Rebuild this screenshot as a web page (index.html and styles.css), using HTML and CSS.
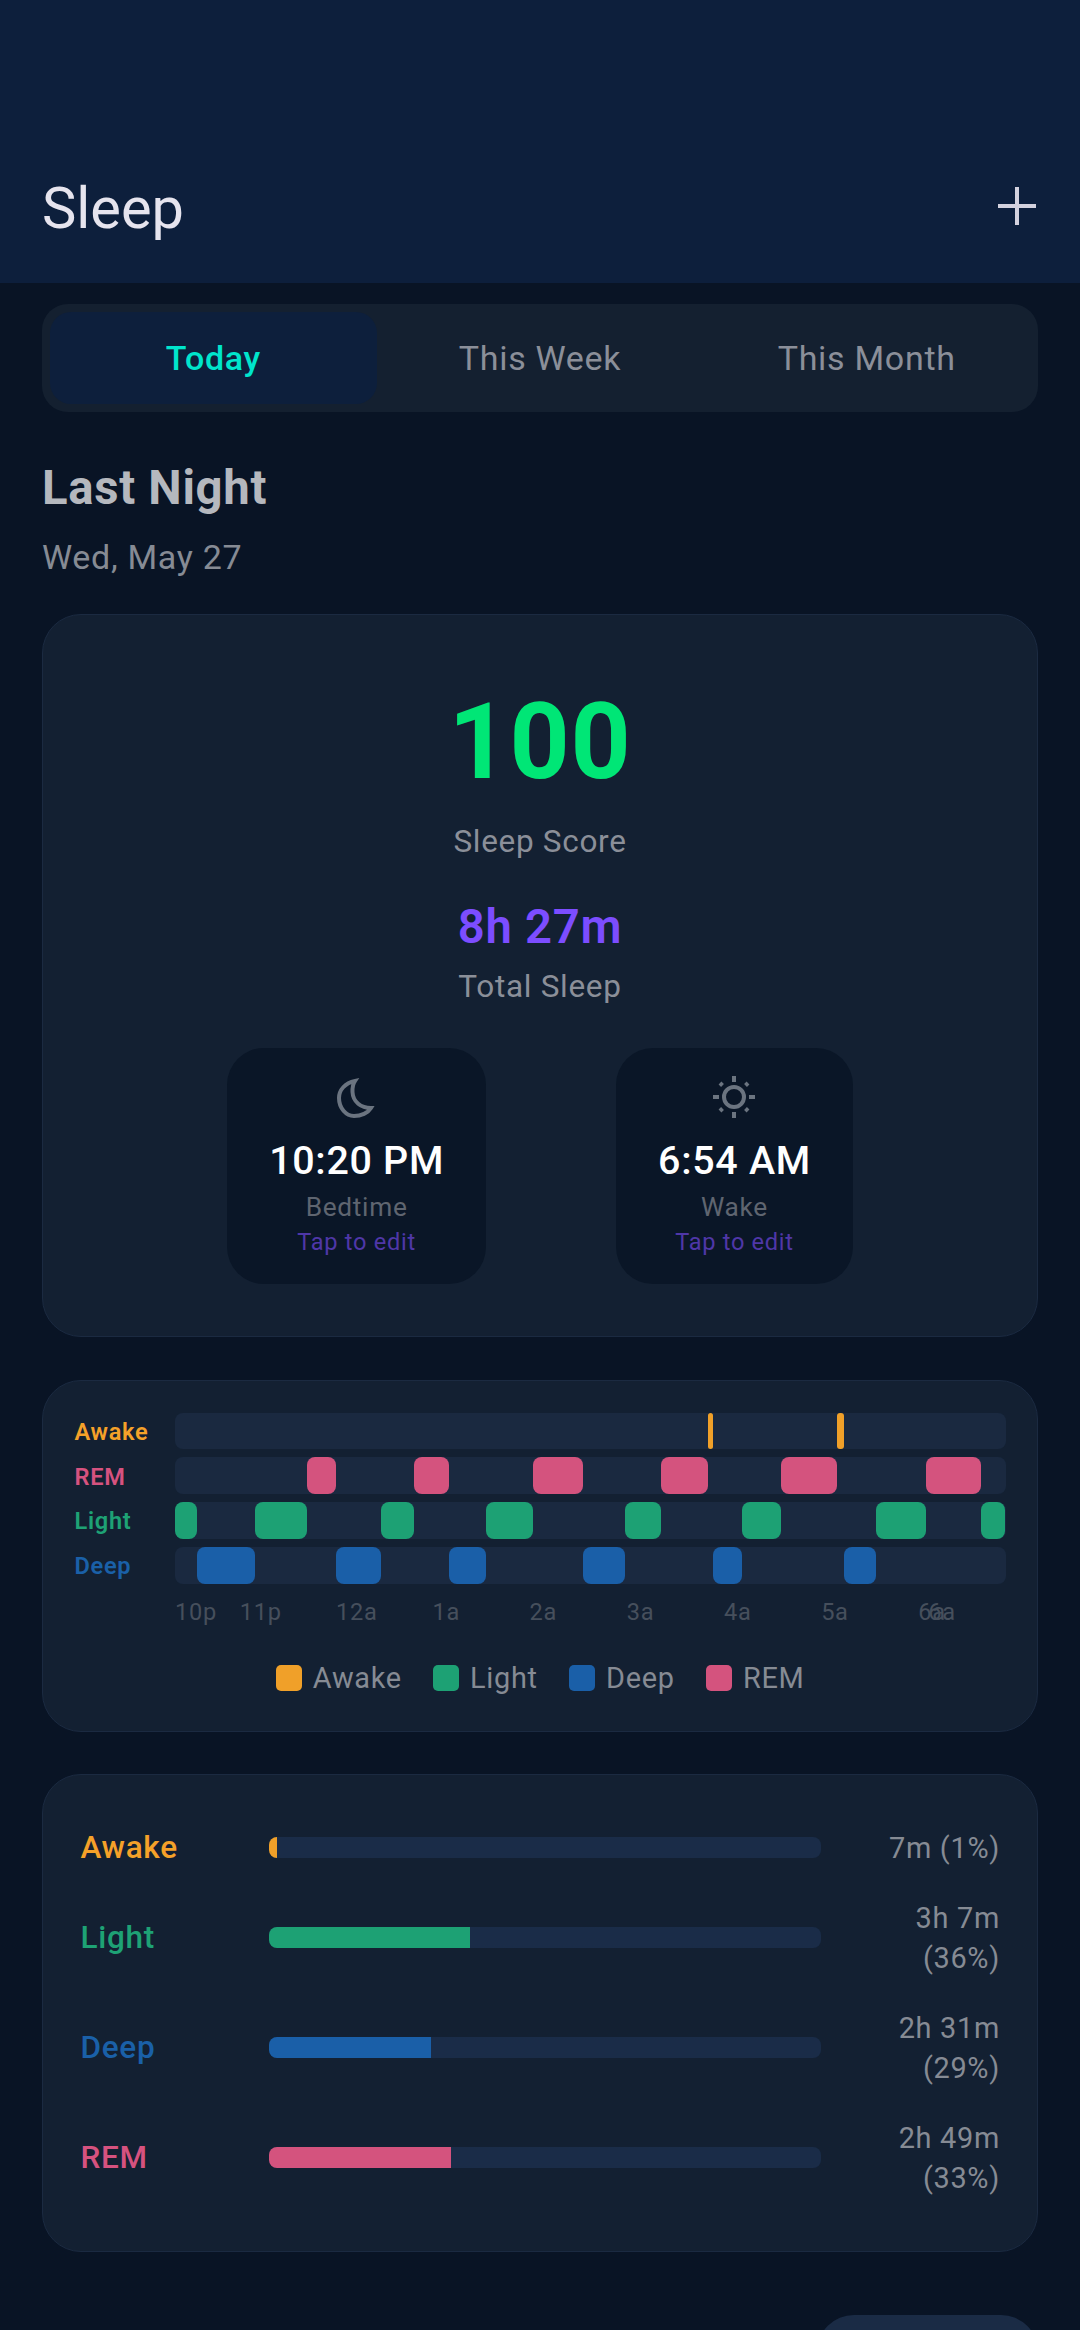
FILE: index.html
```html
<!DOCTYPE html>
<html lang="en">
<head>
<meta charset="utf-8">
<title>Sleep</title>
<link rel="stylesheet" href="styles.css">
</head>
<body>
<div class="page">
  <header class="header">
    <h1 class="title">Sleep</h1>
    <svg class="add" viewBox="0 0 38 38" aria-hidden="true"><path d="M19 0V38M0 19H38"/></svg>
  </header>
  <main class="content">
    <nav class="tabs">
      <div class="tab active">Today</div>
      <div class="tab">This Week</div>
      <div class="tab">This Month</div>
    </nav>
    <h2 class="section-title">Last Night</h2>
    <div class="section-date">Wed, May 27</div>

    <section class="card score-card">
      <div class="score">100</div>
      <div class="stat-label">Sleep Score</div>
      <div class="total">8h 27m</div>
      <div class="stat-label total-label">Total Sleep</div>
      <div class="times">
        <div class="time-card">
          <svg class="time-icon" viewBox="0 0 48 48" aria-hidden="true"><path d="M22 8C12 10 6 17 6 25C6 35 13 43 21 43C28 43 35 40 38 35C28 35 20 29 19.5 19C19.3 15 20 11 22 8Z"/></svg>
          <div class="time-value">10:20 PM</div>
          <div class="time-label">Bedtime</div>
          <div class="time-edit">Tap to edit</div>
        </div>
        <div class="time-card">
          <svg class="time-icon" viewBox="0 0 48 48" aria-hidden="true"><circle cx="24" cy="24" r="10"/><path d="M24 3V9M24 39V45M3 24H9M39 24H45M10 10L12.5 12.5M38 10L35.500 12.500M10 38L12.500 35.500M38 38L35.500 35.500"/></svg>
          <div class="time-value">6:54 AM</div>
          <div class="time-label">Wake</div>
          <div class="time-edit">Tap to edit</div>
        </div>
      </div>
    </section>

    <section class="card timeline-card">
      <div class="tl-row">
        <div class="tl-label awake">Awake</div>
        <div class="tl-track">
          <i class="seg bg-awake thin" style="left:64.22%;width:.6%"></i>
          <i class="seg bg-awake thin" style="left:79.76%;width:.84%"></i>
        </div>
      </div>
      <div class="tl-row">
        <div class="tl-label rem">REM</div>
        <div class="tl-track">
          <i class="seg bg-rem" style="left:15.9%;width:3.49%"></i>
          <i class="seg bg-rem" style="left:28.8%;width:4.22%"></i>
          <i class="seg bg-rem" style="left:43.13%;width:6.02%"></i>
          <i class="seg bg-rem" style="left:58.55%;width:5.66%"></i>
          <i class="seg bg-rem" style="left:73.01%;width:6.75%"></i>
          <i class="seg bg-rem" style="left:90.48%;width:6.63%"></i>
        </div>
      </div>
      <div class="tl-row">
        <div class="tl-label light">Light</div>
        <div class="tl-track">
          <i class="seg bg-light" style="left:0;width:2.65%"></i>
          <i class="seg bg-light" style="left:9.64%;width:6.27%"></i>
          <i class="seg bg-light" style="left:24.82%;width:3.98%"></i>
          <i class="seg bg-light" style="left:37.47%;width:5.66%"></i>
          <i class="seg bg-light" style="left:54.22%;width:4.34%"></i>
          <i class="seg bg-light" style="left:68.31%;width:4.7%"></i>
          <i class="seg bg-light" style="left:84.46%;width:6.02%"></i>
          <i class="seg bg-light" style="left:97.11%;width:2.89%"></i>
        </div>
      </div>
      <div class="tl-row">
        <div class="tl-label deep">Deep</div>
        <div class="tl-track">
          <i class="seg bg-deep" style="left:2.65%;width:6.99%"></i>
          <i class="seg bg-deep" style="left:19.4%;width:5.42%"></i>
          <i class="seg bg-deep" style="left:33.01%;width:4.46%"></i>
          <i class="seg bg-deep" style="left:49.16%;width:5.06%"></i>
          <i class="seg bg-deep" style="left:64.82%;width:3.49%"></i>
          <i class="seg bg-deep" style="left:80.6%;width:3.86%"></i>
        </div>
      </div>
      <div class="axis">
        <span style="left:0">10p</span>
        <span style="left:7.8%">11p</span>
        <span style="left:19.4%">12a</span>
        <span style="left:31%">1a</span>
        <span style="left:42.7%">2a</span>
        <span style="left:54.4%">3a</span>
        <span style="left:66.1%">4a</span>
        <span style="left:77.8%">5a</span>
        <span style="left:89.5%">6a</span>
        <span style="left:90.7%">6a</span>
      </div>
      <div class="legend">
        <div class="legend-item"><i class="swatch bg-awake"></i>Awake</div>
        <div class="legend-item"><i class="swatch bg-light"></i>Light</div>
        <div class="legend-item"><i class="swatch bg-deep"></i>Deep</div>
        <div class="legend-item"><i class="swatch bg-rem"></i>REM</div>
      </div>
    </section>

    <section class="card breakdown-card">
      <div class="bd-row">
        <div class="bd-label awake">Awake</div>
        <div class="bd-track"><i class="bd-fill bg-awake" style="width:1.4%"></i></div>
        <div class="bd-value">7m (1%)</div>
      </div>
      <div class="bd-row">
        <div class="bd-label light">Light</div>
        <div class="bd-track"><i class="bd-fill bg-light" style="width:36.4%"></i></div>
        <div class="bd-value">3h 7m (36%)</div>
      </div>
      <div class="bd-row">
        <div class="bd-label deep">Deep</div>
        <div class="bd-track"><i class="bd-fill bg-deep" style="width:29.3%"></i></div>
        <div class="bd-value">2h 31m (29%)</div>
      </div>
      <div class="bd-row">
        <div class="bd-label rem">REM</div>
        <div class="bd-track"><i class="bd-fill bg-rem" style="width:33%"></i></div>
        <div class="bd-value">2h 49m (33%)</div>
      </div>
    </section>

    <div class="footer-row"><div class="footer-btn"></div></div>
  </main>
</div>
</body>
</html>
```

FILE: styles.css
```css
* { box-sizing: border-box; }
html, body { margin: 0; padding: 0; }
body {
  width: 1080px;
  height: 2330px;
  overflow: hidden;
  background: #091425;
  font-family: Roboto, "Noto Sans", sans-serif;
  letter-spacing: .7px;
}
.page { display: flex; flex-direction: column; height: 2330px; overflow: hidden; }

.header {
  height: 283px;
  flex: none;
  background: #0d1f3c;
  display: flex;
  align-items: flex-end;
  justify-content: space-between;
  padding: 0 44px 41px 42px;
}
.title { margin: 0; font-size: 57.75px; line-height: 68px; font-weight: 400; letter-spacing: 0; color: #e6e4ee; }
.add { width: 38px; height: 38px; margin-bottom: 17px; flex: none; }
.add path { fill: none; stroke: #d3d1de; stroke-width: 4; }

.content { padding: 21px 42px 0; display: flex; flex-direction: column; }

.tabs {
  height: 108px;
  display: flex;
  padding: 8px;
  background: #142030;
  border-radius: 26px;
  flex: none;
}
.tab {
  flex: 1;
  display: flex;
  align-items: center;
  justify-content: center;
  font-size: 34px;
  color: #8b8f99;
  border-radius: 21px;
}
.tab.active { background: #0d1f3c; color: #00e5cc; font-weight: 500; }

.section-title {
  margin: 48px 0 0;
  font-size: 47.25px;
  line-height: 56px;
  font-weight: 700;
  color: #b5b8be;
}
.section-date { margin-top: 21px; font-size: 34px; line-height: 40px; color: #868b94; }

.card {
  background: #132032;
  border: 1.5px solid #1b2a41;
  border-radius: 39px;
  flex: none;
}
.score-card {
  margin-top: 37px;
  height: 723px;
  padding-top: 68px;
  display: flex;
  flex-direction: column;
  align-items: center;
}
.score { font-size: 105px; line-height: 120px; font-weight: 700; color: #00e676; }
.stat-label { margin-top: 18.5px; font-size: 31.5px; line-height: 40px; color: #8b8f99; }
.total { margin-top: 37.5px; font-size: 47.25px; line-height: 56px; font-weight: 600; color: #7c4dff; }
.stat-label.total-label { margin-top: 11.5px; }

.times { display: flex; justify-content: center; gap: 130px; margin-top: 41.5px; }
.time-card {
  background: #0a1627;
  border-radius: 37px;
  height: 236px;
  padding: 25px 42px 0;
  display: flex;
  flex-direction: column;
  align-items: center;
}
.time-icon { width: 48px; height: 48px; flex: none; }
.time-icon * { fill: none; stroke: #6b7480; stroke-width: 4; }
.time-value { margin-top: 16.5px; font-size: 39.4px; line-height: 46px; font-weight: 500; color: #fff; }
.time-label { margin-top: 6.5px; font-size: 26.25px; line-height: 34px; color: #5f6570; }
.time-edit { margin-top: 3px; font-size: 23.6px; line-height: 30px; color: #4f37a8; }

.timeline-card { margin-top: 43px; height: 352px; padding: 31.5px 31.500px 0; }
.tl-row { display: flex; align-items: center; height: 36.75px; margin-bottom: 8px; }
.tl-label { width: 100.500px; flex: none; font-size: 23.6px; line-height: 30px; padding-top: 2px; font-weight: 600; }
.tl-track { position: relative; flex: 1; height: 100%; background: #1a2940; border-radius: 8px; }
.seg { position: absolute; top: 0; bottom: 0; border-radius: 8px; }
.seg.thin { border-radius: 3px; }

.awake { color: #f5a129; }
.rem { color: #d6527f; }
.light { color: #1ea275; }
.deep { color: #1a60a8; }
.bg-awake { background: #f0a029; }
.bg-rem { background: #d4537e; }
.bg-light { background: #1da174; }
.bg-deep { background: #1a5fa8; }

.axis { position: relative; margin-left: 100.500px; height: 32px; margin-top: 12.5px; }
.axis span { position: absolute; top: 0; font-size: 23.6px; line-height: 32px; color: #464f5c; }

.legend { display: flex; justify-content: center; gap: 31px; margin-top: 33px; }
.legend-item { display: flex; align-items: center; gap: 11px; font-size: 28.9px; line-height: 34px; color: #868b94; }
.swatch { width: 26.25px; height: 26.25px; border-radius: 5px; flex: none; }

.breakdown-card {
  margin-top: 42px;
  height: 478px;
  padding: 52.5px 37px 0 37.500px;
  display: flex;
  flex-direction: column;
  gap: 30px;
}
.bd-row { display: flex; align-items: center; }
.bd-label { width: 188.500px; flex: none; font-size: 31.5px; font-weight: 500; }
.bd-track { width: 552px; height: 21px; flex: none; background: #1a2c48; border-radius: 8px; overflow: hidden; }
.bd-fill { display: block; height: 100%; }
.bd-value { flex: 1; padding-left: 30px; text-align: right; font-size: 28.9px; line-height: 40px; color: #868b94; }

.footer-row { display: flex; justify-content: flex-end; margin-top: 63px; }
.footer-btn { width: 221px; height: 80px; background: #1a2b45; border-radius: 37px; }
```
